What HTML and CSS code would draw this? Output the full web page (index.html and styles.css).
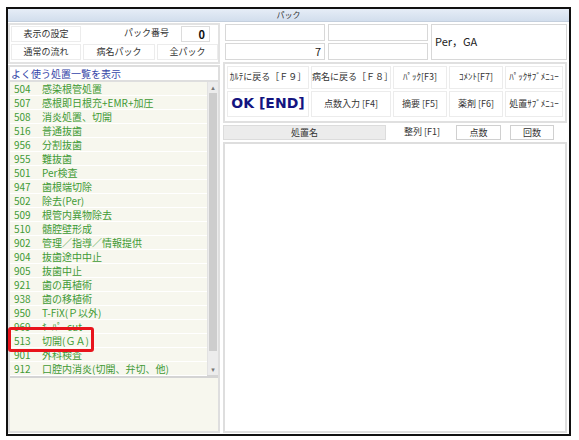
FILE: index.html
```html
<!DOCTYPE html>
<html lang="ja">

<head>
    <meta charset="UTF-8">
    <title>パック</title>
    <link rel="stylesheet" href="styles.css">
</head>

<body>
    <div class="window">
        <div class="titlebar">パック</div>

        <div class="main">
            <!-- left side -->
            <div class="left">
                <div class="settings">
                    <div class="cell">表示の設定</div>
                    <div class="label">パック番号</div>
                    <div class="num-box">0</div>
                    <div class="cell">通常の流れ</div>
                    <div class="cell">病名パック</div>
                    <div class="cell wide">全パック</div>
                </div>

                <div class="list-panel">
                    <div class="list-title">よく使う処置一覧を表示</div>
                    <div class="list-wrap">
                        <ul class="list" id="list"></ul>
                        <div class="scrollbar">
                            <div class="arrow">&#9652;</div>
                            <div class="thumb"></div>
                            <div class="track"></div>
                            <div class="arrow">&#9662;</div>
                        </div>
                        <div class="highlight"></div>
                    </div>
                    <div class="list-foot"></div>
                </div>
            </div>

            <!-- right side -->
            <div class="right">
                <div class="info">
                    <div class="box"></div>
                    <div class="box"></div>
                    <div class="box big">Per，GA</div>
                    <div class="box num">7</div>
                    <div class="box"></div>
                </div>

                <div class="buttons">
                    <div class="btn">ｶﾙﾃに戻る［Ｆ９］</div>
                    <div class="btn">病名に戻る［Ｆ８］</div>
                    <div class="btn">ﾊﾟｯｸ[F3]</div>
                    <div class="btn">ｺﾒﾝﾄ[F7]</div>
                    <div class="btn">ﾊﾟｯｸｻﾌﾞﾒﾆｭｰ</div>
                    <div class="btn ok">OK [END]</div>
                    <div class="btn">点数入力 [F4]</div>
                    <div class="btn">摘要 [F5]</div>
                    <div class="btn">薬剤 [F6]</div>
                    <div class="btn">処置ｻﾌﾞﾒﾆｭｰ</div>
                </div>

                <div class="head-row">
                    <div class="h-name">処置名</div>
                    <div class="h-sort">整列 [F1]</div>
                    <div class="h-box">点数</div>
                    <div class="h-box">回数</div>
                </div>

                <div class="content"></div>
            </div>
        </div>
    </div>

    <script>
        const items = [
            ['504', '感染根管処置'],
            ['507', '感根即日根充+EMR+加圧'],
            ['508', '消炎処置、切開'],
            ['516', '普通抜歯'],
            ['956', '分割抜歯'],
            ['955', '難抜歯'],
            ['501', 'Per検査'],
            ['947', '歯根端切除'],
            ['502', '除去(Per)'],
            ['509', '根管内異物除去'],
            ['510', '髄腔壁形成'],
            ['902', '管理／指導／情報提供'],
            ['904', '抜歯途中中止'],
            ['905', '抜歯中止'],
            ['921', '歯の再植術'],
            ['938', '歯の移植術'],
            ['950', 'T-FiX(Ｐ以外)'],
            ['969', 'ｷｰﾊﾟｰcut'],
            ['513', '切開(ＧＡ)'],
            ['901', '外科検査'],
            ['912', '口腔内消炎(切開、弁切、他)']
        ];

        const list = document.getElementById('list');
        items.forEach(item => {
            const li = document.createElement('li');
            li.innerHTML = `<span class="code">${item[0]}</span><span>${item[1]}</span>`;
            list.appendChild(li);
        });
    </script>
</body>
</html>
```

FILE: styles.css
```css
* {
    margin: 0;
    padding: 0;
    box-sizing: border-box;
}

body {
    font-family: "Noto Sans CJK JP", "DejaVu Sans", sans-serif;
    font-size: 9px;
    color: #333;
    background: #fff;
}

.window {
    margin: 7px 0 0 6px;
    width: 565px;
    height: 429px;
    border: 2px solid #111;
    display: flex;
    flex-direction: column;
    background: #fff;
}

.titlebar {
    height: 13px;
    line-height: 12px;
    text-align: center;
    font-size: 8px;
    background: linear-gradient(#e6edf7, #d2deed);
    border-bottom: 1px solid #c4cfdd;
}

.main {
    flex: 1;
    display: grid;
    grid-template-columns: 212px 1fr;
    gap: 3px;
    padding: 1px 2px 1px 0;
    min-height: 0;
}

/* left */

.left {
    display: flex;
    flex-direction: column;
    gap: 1px;
    min-height: 0;
}

.settings {
    height: 41px;
    border: 2px solid #e2e2e2;
    display: grid;
    grid-template-columns: 70px 72px 22px 37px;
    grid-template-rows: 16px 16px;
    gap: 2px;
    padding: 1px 0 0 1px;
}

.cell {
    border: 1px solid #ececec;
    text-align: center;
    line-height: 14px;
}

.cell.wide {
    grid-column: 3 / 5;
}

.label {
    grid-column: 2 / 4;
    text-align: right;
    line-height: 14px;
    padding-right: 10px;
}

.num-box {
    grid-column: 4;
    width: 29px;
    border: 1px solid #dcdcdc;
    text-align: right;
    font-weight: bold;
    font-size: 11px;
    line-height: 14px;
    padding-right: 4px;
    color: #111;
}

.list-panel {
    flex: 1;
    border: 2px solid #dedede;
    display: flex;
    flex-direction: column;
    min-height: 0;
}

.list-title {
    height: 15px;
    line-height: 14px;
    color: #3444a8;
    font-size: 10px;
    padding-left: 1px;
    border-bottom: 2px solid #dedede;
}

.list-wrap {
    position: relative;
    display: flex;
    height: 296px;
    background: #f7f7ee;
    border-bottom: 3px solid #d4d4d4;
}

.list {
    list-style: none;
    flex: 1;
}

.list li {
    height: 14px;
    line-height: 13px;
    border-bottom: 1px solid #fff;
    color: #3f9a35;
    font-size: 10px;
    display: flex;
    white-space: nowrap;
    overflow: hidden;
}

.code {
    width: 32px;
    padding-left: 4px;
}

.scrollbar {
    width: 11px;
    display: flex;
    flex-direction: column;
    background: #ececec;
    border-left: 1px solid #e2e2e2;
}

.arrow {
    height: 11px;
    font-size: 7px;
    line-height: 11px;
    text-align: center;
    color: #777;
}

.thumb {
    height: 258px;
    background: #cdcdcd;
    margin: 0 1px;
}

.track {
    flex: 1;
}

.highlight {
    position: absolute;
    left: -2px;
    top: 245px;
    width: 86px;
    height: 25px;
    border: 3px solid #e8141c;
    border-radius: 3px;
}

.list-foot {
    flex: 1;
    background: #f7f7ee;
}

/* right */

.right {
    display: flex;
    flex-direction: column;
    gap: 2px;
    min-height: 0;
}

.info {
    height: 37px;
    display: grid;
    grid-template-columns: 100px 100px 1fr;
    grid-template-rows: 1fr 1fr;
    gap: 2px 3px;
    padding: 1px 0 0 2px;
}

.box {
    border: 1px solid #d8d8d8;
}

.box.big {
    grid-column: 3;
    grid-row: 1 / 3;
    font-size: 11px;
    line-height: 33px;
    padding-left: 3px;
    color: #222;
}

.box.num {
    text-align: right;
    font-size: 11px;
    line-height: 14px;
    padding-right: 3px;
    color: #222;
}

.buttons {
    height: 61px;
    border: 2px solid #e0e0e0;
    display: grid;
    grid-template-columns: 82px 80px 54px 54px 1fr;
    grid-template-rows: 23px 26px;
    gap: 2px;
    padding: 2px 2px 0 2px;
}

.btn {
    border: 1px solid #ececec;
    text-align: center;
    line-height: 20px;
    white-space: nowrap;
    font-size: 9px;
}

.buttons .btn:nth-child(n+6) {
    line-height: 23px;
}

.btn.ok {
    font-family: "DejaVu Sans", sans-serif;
    font-size: 14px;
    font-weight: bold;
    color: #141480;
}

.head-row {
    height: 15px;
    display: flex;
    align-items: stretch;
}

.h-name {
    width: 163px;
    background: #ececec;
    border: 1px solid #dcdcdc;
    text-align: center;
    line-height: 13px;
}

.h-sort {
    width: 56px;
    text-align: center;
    line-height: 14px;
    margin-left: 8px;
}

.h-box {
    width: 45px;
    border: 1px solid #d0d0d0;
    text-align: center;
    line-height: 13px;
    margin-left: 6px;
}

.head-row .h-box:last-child {
    margin-left: 9px;
    width: 44px;
}

.content {
    flex: 1;
    border: 2px solid #dedede;
    background: #fff;
}
```
